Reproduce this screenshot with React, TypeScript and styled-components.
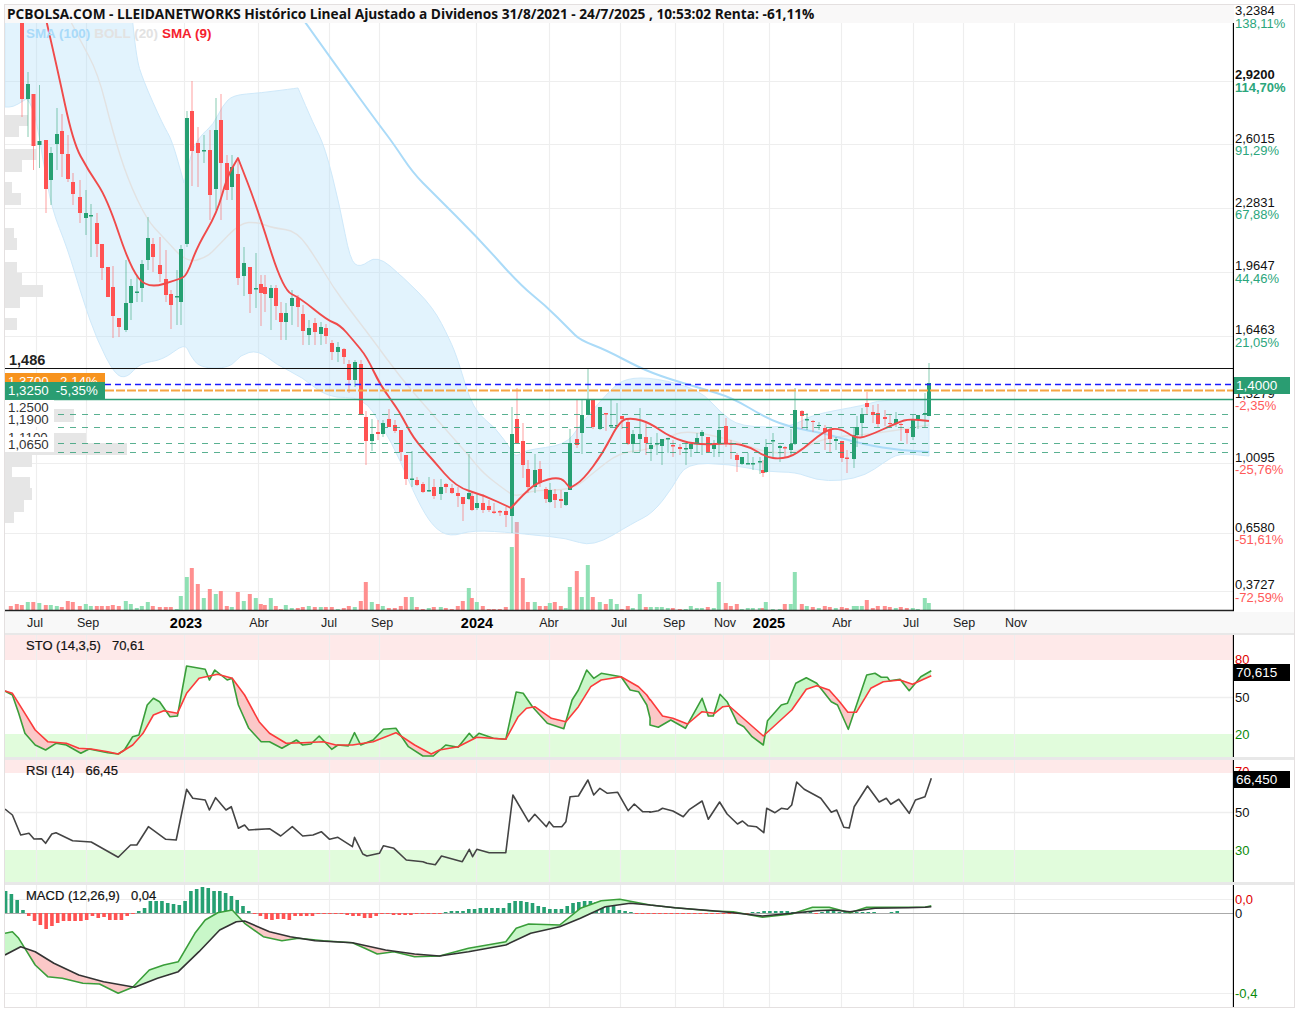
import React from "react";
import styled, { createGlobalStyle } from "styled-components";

type Pt = [number, number];
// x, body top, body bottom, wick top, wick bottom, colour, volume
type Candle = [number, number, number, number, number, "r" | "g", number];

const RED = "#ff5252";
const GREEN = "#26a072";
const VOL_RED = "#ff8f8f";
const VOL_GREEN = "#8fe0b4";
const GRID = "#eeeeee";

const candles: Candle[] = [
  [11, 0, 0, 0, 0, "r", 4], [17, 0, 0, 0, 0, "r", 6],
  [22, 10, 99, 10, 117, "r", 5], [28, 84, 99, 72, 137, "g", 8], [33.5, 94, 146, 94, 170, "r", 8], [39.5, 141, 145, 85, 168, "g", 7],
  [46, 140, 189, 140, 213, "r", 5], [51, 153, 180, 147, 205, "g", 5], [57, 134, 144, 108, 170, "g", 4], [62, 131, 154, 114, 177, "r", 3],
  [68, 154, 179, 135, 182, "r", 9], [73, 182, 194, 173, 205, "r", 8], [80, 197, 213, 180, 223, "r", 4], [86, 213, 218, 190, 235, "g", 6],
  [91, 215, 216.5, 204, 257, "g", 4], [97, 223, 244, 213, 257, "r", 4], [102, 244, 268, 244, 280, "r", 4], [108, 267, 297, 267, 297, "r", 4],
  [113, 287, 316, 266, 338, "r", 5], [119, 318, 327, 318, 337, "r", 4], [126, 303, 330, 260, 332, "g", 9], [131, 286, 303, 279, 320, "g", 6],
  [137, 291.5, 293, 275, 302, "g", 2], [142, 264, 288, 260, 302, "g", 4], [148, 238, 260, 217, 270, "g", 8], [153, 244, 257, 238, 272, "r", 4],
  [160, 265, 274, 237, 282, "r", 3], [166, 279, 295, 250, 302, "r", 3], [171, 294, 305, 290, 329, "r", 3], [177, 296, 297.5, 270, 325, "g", 1],
  [181, 249, 302, 245, 325, "g", 14], [187, 118, 244, 111, 247, "g", 33], [192, 111, 151, 81, 186, "r", 42], [198, 143, 153, 127, 187, "r", 26],
  [204, 150, 151.5, 135, 163, "g", 12], [210, 150, 195, 130, 220, "r", 21], [216, 130, 189, 98, 210, "g", 16], [221, 120, 163, 94, 220, "r", 19],
  [227, 163, 190, 155, 200, "r", 4], [232, 167, 187, 155, 200, "g", 3], [238, 174, 278, 158, 285, "r", 18], [244, 263, 276, 247, 296, "g", 9],
  [250, 267, 294, 267, 313, "r", 16], [256, 288, 289.5, 253, 308, "g", 12], [261, 284, 293, 275, 326, "r", 6], [265, 287, 294, 275, 312, "r", 5],
  [271, 288, 298, 285, 330, "g", 12], [276, 288, 306, 285, 320, "r", 4], [281, 313, 322, 302, 340, "r", 1], [286, 313, 322, 303, 340, "g", 5],
  [292, 298, 306, 290, 325, "g", 2], [298, 298, 307, 295, 327, "r", 2], [303, 314, 331, 305, 345, "r", 3], [309, 328, 335, 320, 345, "g", 4],
  [315, 323, 332, 318, 345, "r", 3], [321, 327, 334, 322, 345, "g", 3], [326, 328, 336, 324, 344, "r", 3], [332, 343, 352, 340, 360, "r", 3],
  [338, 347, 352, 342, 362, "g", 1], [344, 349, 357, 348, 364, "r", 2], [349, 364, 380, 360, 393, "r", 4], [355, 362, 380, 360, 387, "g", 3],
  [361, 364, 415, 360, 415, "r", 9], [366, 417, 441, 411, 465, "r", 28], [372, 434, 441, 419, 451, "g", 8], [378, 432, 434, 420, 440, "r", 6],
  [383, 423, 434, 420, 437, "g", 4], [389, 419, 427, 409, 427, "r", 2], [395, 425, 431, 420, 433, "r", 2], [401, 430, 452, 430, 461, "r", 4],
  [406, 455, 479, 455, 485, "r", 13], [412, 478.5, 480, 451, 487, "g", 13], [417, 480, 485, 477, 486, "r", 3], [423, 484, 492, 482, 493, "r", 1],
  [429, 490, 491.5, 477, 492, "g", 2], [434, 487, 496, 479, 499, "r", 3], [441, 487, 494, 479, 500, "g", 3], [446, 484, 487, 483, 493, "r", 2],
  [452, 488, 493, 484, 494, "r", 1], [458, 493, 496, 487, 507, "r", 4], [463, 497, 504, 497, 521, "r", 9], [469, 493, 499, 454, 500, "g", 22],
  [472, 496, 510, 492, 511, "r", 12], [477, 503, 508, 493, 510, "g", 8], [483, 503, 510, 494, 513, "r", 4], [489, 506, 510, 500, 512, "r", 1],
  [494, 511.5, 513, 503, 514, "r", 1], [500, 511, 512.5, 510, 516, "r", 1], [506, 511, 515, 507, 527, "r", 3], [512, 434, 516, 407, 533, "g", 63],
  [517, 419, 443, 388, 444, "r", 88], [523, 441, 465, 423, 478, "r", 32], [528, 469, 487, 460, 493, "r", 8], [535, 470, 487, 454, 493, "g", 8],
  [540, 469, 483, 461, 487, "r", 4], [546, 489, 499, 487, 503, "r", 4], [550, 490, 502, 483, 503, "g", 7], [555, 494, 500, 489, 508, "r", 8],
  [561, 499, 501, 490, 508, "r", 4], [566, 492, 505, 492, 506, "g", 2], [570, 443, 490, 429, 490, "g", 23], [577, 439, 445, 400, 448, "r", 39],
  [582, 415, 433, 400, 454, "g", 13], [588, 399, 415, 368, 415, "g", 45], [593, 399, 427, 399, 429, "r", 13], [600, 407, 429, 407, 430, "g", 8],
  [606, 413, 414.5, 413, 431, "r", 6], [611, 425, 426.5, 399, 426, "g", 11], [617, 425, 426.5, 403, 427, "g", 6], [622, 416, 419, 416, 429, "r", 1],
  [628, 422, 444, 418, 445, "r", 4], [633, 434, 444, 430, 453, "g", 2], [640, 434, 439, 408, 452, "g", 16], [646, 437, 443, 423, 455, "r", 3],
  [651, 445, 449, 437, 461, "g", 3], [657, 443, 444.5, 433, 455, "g", 3], [662, 439, 446, 439, 465, "g", 3], [668, 438, 439.5, 438, 453, "g", 2],
  [673, 445, 446.5, 440, 457, "r", 2], [680, 447, 449, 444, 455, "r", 1], [686, 448, 449.5, 443, 465, "g", 1], [691, 444, 449, 443, 457, "g", 4],
  [697, 438, 443, 433, 453, "g", 2], [702, 432, 436, 430, 455, "g", 2], [708, 437, 452, 437, 453, "r", 3], [714, 444, 449, 440, 457, "g", 2],
  [719, 430, 444, 415, 457, "g", 28], [726, 426, 444, 418, 447, "r", 7], [731, 443, 444.5, 440, 459, "r", 4], [737, 455, 460, 453, 472, "r", 6],
  [742, 457, 464, 457, 465, "g", 1], [748, 463, 464.5, 453, 464, "g", 2], [753, 463, 464.5, 457, 470, "g", 2], [760, 461, 462.5, 457, 474, "g", 2],
  [763, 470, 473, 460, 477, "r", 2], [766, 447, 472, 439, 473, "g", 8], [773, 440, 441.5, 433, 458, "g", 1], [780, 446, 448, 445, 462, "g", 1],
  [785, 447, 448.5, 446, 457, "r", 6], [791, 444, 450, 429, 455, "g", 6], [795, 410, 444, 388, 445, "g", 38], [802, 411, 416, 410, 429, "r", 6],
  [807, 419, 420.5, 413, 430, "g", 4], [813, 421, 422, 420, 432, "r", 3], [819, 425, 426, 422, 430, "g", 2], [825, 428, 432, 425, 450, "r", 4],
  [830, 430, 439, 428, 452, "r", 3], [836, 439, 441, 437, 450, "g", 2], [842, 441, 458, 441, 462, "r", 3], [847, 457.5, 459, 450, 473, "r", 2],
  [854, 435, 459, 427, 468, "g", 4], [857, 427, 435, 416, 447, "g", 4], [862, 414, 423, 408, 437, "g", 4], [867, 403, 407, 392, 415, "r", 10],
  [873, 412, 415, 405, 423, "r", 2], [878, 413, 424, 404, 427, "r", 4], [885, 417, 419, 410, 426, "r", 4], [890, 423, 424, 414, 426, "r", 3],
  [896, 419, 424, 412, 427, "g", 2], [901, 424, 425, 423, 441, "r", 3], [907, 429, 433, 429, 444, "r", 2], [913, 420, 437, 415, 440, "g", 2],
  [918, 415, 419, 415, 429, "g", 1], [925, 413, 414.5, 393, 427, "g", 12], [929, 383, 416, 363, 416, "g", 7],
];

const z5 = (p: Pt[]): Pt[] => p.map(([x, y]) => [x / 2.412, 630 + y / 3]);
const z6 = (p: Pt[]): Pt[] => p.map(([x, y]) => [650 + x / 2.4, 630 + y / 3]);

const bandUpper: Pt[] = [[132, 15], [136, 57], [143, 80], [163, 125], [172, 140], [184, 183], [184, 183], [193, 147], [203, 133], [213, 125], [223, 105], [233, 95], [260, 93], [298, 88], [298, 88], [313, 123], [325, 147], [340, 207], [350, 260], [360, 268], [377, 255], [403, 277], [433, 307], [450, 340], [458, 360], [473, 410], [496, 428], [511, 450], [516, 457], [525, 450], [566, 445], [580, 425], [610, 390], [626, 378], [656, 378], [700, 390], [720, 412], [740, 427], [793, 427], [810, 415], [866, 405], [880, 400], [929, 400], [929, 400]];
const bandLower: Pt[] = [[929, 456], [929, 456], [899, 453], [883, 463], [866, 475], [841, 481], [816, 480], [796, 472], [766, 472], [730, 464], [686, 463], [673, 487], [653, 513], [633, 523], [593, 547], [566, 538], [533, 535], [516, 533], [473, 530], [450, 537], [433, 527], [417, 500], [400, 460], [383, 427], [363, 397], [328, 398], [302, 377], [277, 365], [258, 350], [240, 355], [230, 368], [200, 368], [190, 355], [185, 343], [163, 360], [140, 363], [127, 378], [115, 375], [97, 340], [83, 300], [67, 247], [52, 210], [43, 160], [36, 118], [28, 98], [23, 101], [13, 107], [5, 107], [5, 107], [5, 15]];
const sma100: Pt[] = [[300, 15], [337, 67], [377, 122], [393, 143], [413, 173], [433, 193], [480, 240], [520, 285], [545, 305], [570, 330], [580, 340], [606, 350], [640, 368], [666, 378], [700, 388], [733, 398], [766, 418], [793, 428], [823, 433], [866, 445], [899, 450], [929, 452]];
const bollMid: Pt[] = [[70, 20], [80, 40], [98, 73], [113, 133], [128, 180], [147, 220], [163, 237], [187, 263], [207, 257], [217, 247], [240, 223], [257, 222], [273, 228], [297, 231], [317, 260], [333, 287], [350, 310], [373, 340], [400, 377], [433, 415], [470, 457], [483, 473], [505, 490], [516, 497], [533, 490], [573, 490], [593, 473], [620, 452], [650, 450], [666, 438], [686, 430], [733, 440], [766, 453], [796, 453], [825, 437], [866, 435], [929, 425]];
const sma9: Pt[] = [[45, 15], [57, 67], [73, 142], [88, 170], [107, 198], [130, 267], [147, 289], [180, 279], [187, 275], [197, 247], [217, 213], [227, 177], [238, 158], [238, 158], [257, 207], [283, 290], [300, 298], [327, 320], [340, 325], [353, 340], [367, 357], [380, 385], [400, 412], [413, 438], [433, 460], [456, 487], [483, 495], [511, 508], [511, 508], [523, 495], [536, 483], [560, 476], [570, 488], [570, 488], [583, 480], [603, 453], [620, 420], [633, 418], [650, 423], [670, 437], [696, 445], [733, 443], [750, 447], [766, 457], [780, 459], [796, 455], [825, 430], [840, 428], [855, 438], [866, 437], [899, 422], [909, 419], [929, 421]];

const stoK: Pt[] = [...z5([[12, 183], [30, 195], [45, 250], [60, 310], [85, 345], [110, 360], [135, 340], [160, 345], [195, 370], [215, 357], [260, 368], [285, 372], [300, 360], [320, 320], [335, 315], [355, 225], [370, 205], [385, 215], [410, 260], [428, 258], [450, 108], [495, 118], [505, 150], [518, 120], [548, 150], [560, 145], [575, 225], [600, 295], [630, 335], [650, 335], [680, 355], [715, 330], [730, 345], [750, 342], [770, 318], [800, 358], [815, 345], [840, 348], [855, 308], [870, 345], [900, 330], [925, 298], [955, 295], [985, 350], [1020, 378], [1045, 378], [1075, 345], [1105, 352], [1132, 310], [1142, 325], [1155, 310], [1190, 325], [1220, 328], [1245, 186], [1262, 190], [1285, 232], [1320, 280], [1360, 296], [1380, 210], [1395, 180], [1415, 120], [1432, 145], [1450, 130], [1498, 140], [1520, 180], [1540, 185], [1560, 225], [1568, 265]]), ...z6([[0, 285], [20, 292], [50, 270], [85, 295], [125, 205], [140, 258], [152, 258], [168, 193], [185, 215], [210, 280], [225, 290], [245, 320], [272, 345], [282, 272], [315, 225], [330, 220], [350, 160], [375, 143], [400, 160], [435, 215], [450, 225], [476, 298], [520, 135], [540, 130], [555, 142], [570, 142], [575, 152], [600, 148], [622, 182], [650, 140], [675, 122]])];
const stoD: Pt[] = [...z5([[12, 183], [30, 190], [60, 250], [85, 300], [115, 335], [160, 340], [190, 355], [220, 357], [260, 365], [285, 372], [320, 345], [345, 310], [370, 255], [395, 242], [428, 250], [450, 190], [480, 145], [525, 133], [560, 145], [590, 195], [625, 275], [650, 310], [690, 340], [730, 338], [780, 335], [810, 345], [850, 345], [900, 335], [955, 308], [1000, 345], [1040, 372], [1060, 360], [1105, 350], [1150, 322], [1220, 328], [1250, 260], [1270, 235], [1290, 230], [1330, 265], [1365, 275], [1395, 230], [1425, 170], [1450, 150], [1498, 140], [1540, 170], [1560, 195], [1568, 210]]), ...z6([[0, 208], [30, 258], [55, 265], [90, 282], [125, 245], [155, 250], [175, 230], [190, 228], [272, 318], [340, 240], [375, 178], [400, 167], [430, 180], [455, 215], [475, 247], [495, 247], [530, 175], [560, 155], [600, 150], [630, 163], [675, 137]])];
const rsi: Pt[] = [...z5([[12, 537], [30, 555], [50, 615], [70, 610], [82, 627], [100, 626], [110, 640], [125, 612], [135, 608], [175, 632], [220, 636], [285, 682], [315, 645], [330, 645], [358, 590], [400, 628], [425, 630], [450, 478], [465, 505], [495, 510], [505, 540], [520, 503], [545, 540], [558, 530], [575, 595], [590, 585], [600, 600], [650, 596], [677, 618], [705, 590], [730, 618], [755, 615], [775, 605], [795, 628], [815, 622], [850, 650], [855, 622], [875, 672], [885, 678], [915, 670], [925, 647], [950, 655], [980, 690], [1020, 695], [1030, 700], [1050, 704], [1065, 678], [1115, 695], [1132, 658], [1140, 680], [1150, 658], [1180, 668], [1220, 668], [1237, 495], [1275, 575], [1290, 553], [1318, 590], [1325, 575], [1335, 590], [1355, 590], [1365, 575], [1375, 500], [1395, 498], [1418, 450], [1432, 495], [1447, 475], [1465, 490], [1490, 487], [1515, 542], [1530, 522], [1550, 545], [1568, 545]]), ...z6([[0, 547], [20, 542], [30, 535], [55, 543], [80, 560], [95, 538], [125, 513], [140, 568], [167, 516], [185, 552], [210, 582], [222, 573], [235, 587], [255, 590], [273, 608], [280, 535], [300, 548], [315, 535], [330, 538], [340, 525], [352, 456], [370, 478], [410, 505], [435, 547], [448, 540], [465, 592], [478, 594], [490, 530], [522, 468], [550, 516], [567, 505], [578, 523], [597, 508], [622, 550], [637, 510], [660, 500], [675, 445]])];
const macd: Pt[] = [...z5([[12, 910], [30, 905], [45, 925], [60, 955], [85, 1005], [115, 1040], [150, 1045], [200, 1060], [240, 1062], [285, 1090], [320, 1072], [360, 1020], [395, 1005], [430, 995], [470, 910], [495, 870], [525, 848], [560, 840], [590, 880], [635, 920], [680, 932], [720, 925], [780, 932], [850, 938], [880, 955], [910, 972], [950, 965], [1000, 980], [1060, 978], [1130, 955], [1220, 935], [1245, 895], [1275, 882], [1350, 885], [1400, 835], [1450, 812], [1495, 808], [1568, 825]]), ...z6([[0, 825], [60, 833], [150, 843], [200, 845], [270, 862], [340, 852], [390, 832], [430, 832], [480, 848], [520, 832], [620, 832], [660, 832], [675, 827]])];
const signal: Pt[] = [...z5([[12, 975], [50, 950], [85, 965], [130, 1000], [190, 1035], [250, 1055], [325, 1072], [380, 1045], [430, 1025], [480, 965], [530, 900], [570, 875], [590, 873], [650, 905], [700, 920], [760, 932], [850, 938], [930, 960], [1000, 972], [1060, 978], [1130, 965], [1220, 945], [1280, 910], [1350, 890], [1400, 865], [1460, 830], [1520, 820], [1568, 825]]), ...z6([[0, 825], [60, 833], [150, 842], [200, 848], [270, 858], [340, 850], [400, 842], [440, 840], [480, 845], [540, 835], [620, 833], [660, 832], [675, 830]])];
const hist: number[] = [22, 19, 13, 3, -3, -8, -12, -16, -13, -10, -8, -8, -8, -8, -7, -3, -5, -4, -7, -7, -7, -3, -1, 2, 5, 12, 12, 12, 10, 9, 8, 12, 22, 24, 26, 25, 22, 22, 20, 17, 13, 7, 2, -1, -3, -6, -7, -6, -6, -7, -3, -3, -3, -3, -1, -1, -1, -1, -1, -2, -3, -3, -5, -5, -3, -1, -1, -2, -2, -2, -2, -1, -1, -1, -1, -1, 1, 2, 2, 2, 4, 4, 5, 5, 5, 5, 5, 10, 12, 12, 11, 10, 7, 6, 4, 4, 4, 7, 10, 11, 12, 12, 11, 10, 7, 7, 3, 2, 1, -1, -1, -1, -1, -1, -1, -1, -1, -1, -1, -1, -1, -1, -1, -1, -1, -1, -1, -1, -1, 1, 1, 2, 2, 2, 2, 2, 1, 1, 1, 1, -1, 1, 2, 2, 1, 1, 1, 1, 1, 1, 1, 0, 0, 1, 2];

const verticals = [36, 86, 184, 258, 329, 379, 476, 549, 620, 675, 723, 769, 841, 913, 963, 1014];
const mainHoriz = [81, 144, 208, 272, 336, 463, 533, 591];
const profile: [number, number, number][] = [[115, 126, 23], [126, 137, 14], [149, 160, 32], [160, 172, 17], [182, 193, 7], [193, 205, 16], [228, 238, 9], [238, 250, 12], [262, 273, 12], [273, 285, 17], [285, 297, 38], [297, 308, 15], [318, 330, 12], [409, 422, 69], [433, 443, 81], [443, 455, 122], [455, 467, 27], [467, 477, 7], [477, 488, 25], [488, 500, 27], [500, 512, 19], [512, 523, 9]];

const pts = (p: Pt[]) => p.map(([x, y]) => `${x.toFixed(1)},${y.toFixed(1)}`).join(" ");
const smooth = (p: Pt[], close = false) => {
  let d = `M${p[0][0]} ${p[0][1]}`;
  for (let i = 1; i < p.length - 1; i++) {
    const mx = (p[i][0] + p[i + 1][0]) / 2;
    const my = (p[i][1] + p[i + 1][1]) / 2;
    d += `Q${p[i][0]} ${p[i][1]} ${mx} ${my}`;
  }
  const last = p[p.length - 1];
  return d + `L${last[0]} ${last[1]}` + (close ? "Z" : "");
};
const at = (p: Pt[], x: number) => {
  for (let i = 1; i < p.length; i++) {
    if (x <= p[i][0]) {
      const [x0, y0] = p[i - 1];
      const [x1, y1] = p[i];
      return y0 + ((y1 - y0) * (x - x0)) / Math.max(x1 - x0, 0.001);
    }
  }
  return p[p.length - 1][1];
};
const ribbons = (a: Pt[], b: Pt[]) => {
  const end = Math.min(a[a.length - 1][0], b[b.length - 1][0]);
  const runs: { up: boolean; points: string }[] = [];
  let start = 5;
  let up = at(a, 5) <= at(b, 5);
  const flush = (stop: number) => {
    const top: Pt[] = [];
    const bottom: Pt[] = [];
    for (let x = start; x <= stop; x += 1) {
      top.push([x, at(a, x)]);
      bottom.unshift([x, at(b, x)]);
    }
    runs.push({ up, points: pts([...top, ...bottom]) });
  };
  for (let x = 5; x <= end; x += 1) {
    const now = at(a, x) <= at(b, x);
    if (now !== up) {
      flush(x);
      start = x;
      up = now;
    }
  }
  flush(end);
  return runs;
};

const GlobalStyle = createGlobalStyle`
  html, body { margin: 0; padding: 0; background: #fff; }
  body { font-family: "Liberation Sans", Arial, sans-serif; }
`;
const Frame = styled.div`
  position: relative;
  width: 1291px;
  margin: 4px 0 0 4px;
  box-sizing: border-box;
  border: 1px solid #e4e0e0;
  display: flex;
  flex-direction: column;
`;
const Pane = styled.section`
  display: flex;
  height: ${(p: { $h: number }) => p.$h}px;
`;
const PlotColumn = styled.div`
  position: relative;
  width: 1229px;
  flex: none;
  display: flex;
  flex-direction: column;
`;
const TitleBar = styled.h1`
  margin: 0;
  height: 18px;
  padding-left: 2px;
  background: #f9f8f8;
  font: 700 13.7px/18px "Open Sans", sans-serif;
  color: #111;
  white-space: nowrap;
`;
const Plot = styled.svg`
  display: block;
  flex: none;
`;
const Legend = styled.div`
  position: absolute;
  left: 21px;
  top: 21px;
  display: flex;
  gap: 4px;
  font: 700 13.4px/16px "Liberation Sans", sans-serif;
`;
const LegendItem = styled.span<{ $c: string }>`
  color: ${(p) => p.$c};
`;
const RefLabel = styled.div`
  position: absolute;
  left: 4px;
  top: 346px;
  font: 700 14.5px/18px "Liberation Sans", sans-serif;
  color: #222;
`;
const LevelTag = styled.div<{ $top: number; $bg: string }>`
  position: absolute;
  left: 0;
  top: ${(p) => p.$top}px;
  width: 100px;
  height: 17px;
  padding-left: 3px;
  box-sizing: border-box;
  background: ${(p) => p.$bg};
  color: #fff;
  font: 13.3px/18px "Liberation Sans", sans-serif;
  display: flex;
  gap: 7px;
  white-space: nowrap;
  overflow: hidden;
`;
const LevelLabel = styled.div<{ $top: number }>`
  position: absolute;
  left: 0;
  top: ${(p) => p.$top}px;
  width: 49px;
  height: 15px;
  padding-left: 3px;
  box-sizing: border-box;
  background: #fff;
  color: #333;
  font: 13.3px/15px "Liberation Sans", sans-serif;
  overflow: hidden;
`;
const Axis = styled.div`
  position: relative;
  flex: 1;
  overflow: hidden;
`;
const AxisText = styled.span<{ $top: number; $c?: string; $bold?: boolean }>`
  position: absolute;
  left: 1px;
  top: ${(p) => p.$top}px;
  transform: translateY(-50%);
  color: ${(p) => p.$c ?? "#111"};
  font: ${(p) => (p.$bold ? 700 : 400)} 13px/14px "Liberation Sans", sans-serif;
  white-space: nowrap;
`;
const ValueTag = styled.span<{ $top: number; $bg: string }>`
  position: absolute;
  left: 0;
  top: ${(p) => p.$top}px;
  width: 56px;
  height: 16.5px;
  padding-left: 2px;
  box-sizing: border-box;
  background: ${(p) => p.$bg};
  color: #fff;
  font: 13.5px/17px "Liberation Sans", sans-serif;
`;
const TimeAxis = styled.div`
  position: relative;
  height: 21px;
  background: #f8f8f8;
`;
const TimeLabel = styled.span<{ $x: number; $bold?: boolean }>`
  position: absolute;
  left: ${(p) => p.$x}px;
  top: 3px;
  transform: translateX(-50%);
  color: ${(p) => (p.$bold ? "#000" : "#222")};
  font: ${(p) => (p.$bold ? "700 14.5px" : "400 12.5px")}/16px "Liberation Sans", sans-serif;
`;
const Separator = styled.div<{ $h: number }>`
  height: ${(p) => p.$h}px;
  background: #e8e8e8;
`;
const PaneTitle = styled.div`
  position: absolute;
  left: 21px;
  top: 3px;
  display: flex;
  gap: 11px;
  color: #111;
  font: 13px/16px "Liberation Sans", sans-serif;
  -webkit-text-stroke: 0.2px #111;
`;

const Verticals = ({ y0, y1 }: { y0: number; y1: number }) => (
  <>
    {verticals.map((x) => (
      <line key={x} x1={x + 0.5} x2={x + 0.5} y1={y0} y2={y1} stroke={GRID} strokeWidth={1.2} />
    ))}
  </>
);
const AxisLine = ({ y0, y1 }: { y0: number; y1: number }) => (
  <line x1={1233.5} x2={1233.5} y1={y0} y2={y1} stroke="#000" strokeWidth={1.3} />
);
const Line = ({ p, c, w = 1.5 }: { p: Pt[]; c: string; w?: number }) => (
  <polyline points={pts(p)} fill="none" stroke={c} strokeWidth={w} strokeLinejoin="round" />
);
const Curve = ({ p, c, w }: { p: Pt[]; c: string; w: number }) => (
  <path d={smooth(p)} fill="none" stroke={c} strokeWidth={w} strokeLinejoin="round" />
);
const Ribbon = ({ a, b }: { a: Pt[]; b: Pt[] }) => (
  <>
    {ribbons(a, b).map((r, i) => (
      <polygon key={i} points={r.points} fill={r.up ? "#c9f7c9" : "#fbc8c8"} />
    ))}
  </>
);

const MainChart = () => (
  <Plot width={1229} height={589} viewBox="5 23 1229 589">
    <Verticals y0={23} y1={610} />
    {mainHoriz.map((y) => (
      <line key={y} x1={5} x2={1233} y1={y + 0.5} y2={y + 0.5} stroke={GRID} strokeWidth={1.2} />
    ))}
    {profile.map(([a, b, w]) => (
      <rect key={a} x={5} y={a} width={w} height={b - a} fill="#e6e6e6" />
    ))}
    {candles.map(([x, , , , , c, v]) => (
      <rect key={x} x={x - 2.2} y={610 - v} width={4} height={v} fill={c === "r" ? VOL_RED : VOL_GREEN} />
    ))}
    <path d={smooth([...bandUpper, ...bandLower], true)} fill="#a9dcf9" fillOpacity={0.34} stroke="#cfe9fa" strokeWidth={1} />
    <Curve p={bollMid} c="#e2e2e2" w={1.4} />
    <Curve p={sma100} c="#abdbf8" w={2} />
    {candles.filter((k) => k[4] > 0).map(([x, t, b, wt, wb, c]) => (
      <g key={x} fill={c === "r" ? RED : GREEN}>
        <rect x={x - 0.5} y={wt} width={1} height={wb - wt} opacity={0.55} />
        <rect x={x - 2} y={t} width={4} height={Math.max(b - t, 1)} />
      </g>
    ))}
    <Curve p={sma9} c="#f04a4a" w={1.9} />
    <line x1={5} x2={1233} y1={368.5} y2={368.5} stroke="#111" strokeWidth={1.2} />
    <line x1={105} x2={1233} y1={384.5} y2={384.5} stroke="#1a1aff" strokeWidth={1.3} strokeDasharray="6 4" />
    <line x1={105} x2={1233} y1={390.5} y2={390.5} stroke="#f6a544" strokeWidth={1.8} strokeDasharray="9 2" />
    <line x1={5} x2={1233} y1={399.5} y2={399.5} stroke="#2f9e75" strokeWidth={1.3} />
    {[414.5, 427.5, 443.5, 452.5].map((y) => (
      <line key={y} x1={58} x2={1233} y1={y} y2={y} stroke="#2f9e75" strokeOpacity={0.8} strokeWidth={1} strokeDasharray="6 6" />
    ))}
    <line x1={5} x2={1234} y1={610.5} y2={610.5} stroke="#222" strokeWidth={1.4} />
    <AxisLine y0={23} y1={611} />
  </Plot>
);

const mainAxis: [string, number, string, number, boolean?][] = [
  ["3,2384", 6, "138,11%", 19],
  ["2,9200", 70, "114,70%", 83, true],
  ["2,6015", 134, "91,29%", 146],
  ["2,2831", 198, "67,88%", 210],
  ["1,9647", 261, "44,46%", 274],
  ["1,6463", 325, "21,05%", 338],
  ["1,3279", 389, "-2,35%", 401],
  ["1,0095", 453, "-25,76%", 465],
  ["0,6580", 523, "-51,61%", 535],
  ["0,3727", 580, "-72,59%", 593],
];
const timeLabels: [string, number, boolean?][] = [
  ["Jul", 30], ["Sep", 83], ["2023", 181, true], ["Abr", 254], ["Jul", 324], ["Sep", 377], ["2024", 472, true], ["Abr", 544], ["Jul", 614], ["Sep", 669], ["Nov", 720], ["2025", 764, true], ["Abr", 837], ["Jul", 906], ["Sep", 959], ["Nov", 1011],
];

export default function App() {
  return (
    <>
      <GlobalStyle />
      <Frame>
        <Pane $h={607}>
          <PlotColumn>
            <TitleBar>PCBOLSA.COM - LLEIDANETWORKS Histórico Lineal Ajustado a Dividenos 31/8/2021 - 24/7/2025 , 10:53:02 Renta: -61,11%</TitleBar>
            <MainChart />
            <Legend>
              <LegendItem $c="#a9daf9">SMA (100)</LegendItem>
              <LegendItem $c="#e2e2e2">BOLL (20)</LegendItem>
              <LegendItem $c="#f5222d">SMA (9)</LegendItem>
            </Legend>
            <RefLabel>1,486</RefLabel>
            <LevelTag $top={368} $bg="#f7931e"><span>1,3700</span><span>-2,14%</span></LevelTag>
            <LevelTag $top={377} $bg="#2a9d72"><span>1,3250</span><span>-5,35%</span></LevelTag>
            <LevelLabel $top={395}>1,2500</LevelLabel>
            <LevelLabel $top={407}>1,1900</LevelLabel>
            <LevelLabel $top={425}>1,1100</LevelLabel>
            <LevelLabel $top={432}>1,0650</LevelLabel>
          </PlotColumn>
          <Axis>
            {mainAxis.map(([price, y1, pct, y2, bold]) => (
              <React.Fragment key={price}>
                <AxisText $top={y1} $bold={bold}>{price}</AxisText>
                <AxisText $top={y2} $bold={bold} $c={pct.startsWith("-") ? "#ff5a5a" : "#2ba67c"}>{pct}</AxisText>
              </React.Fragment>
            ))}
            <ValueTag $top={372} $bg="#2a9d72">1,4000</ValueTag>
          </Axis>
        </Pane>
        <TimeAxis>
          {timeLabels.map(([t, x, b]) => (
            <TimeLabel key={`${t}${x}`} $x={x} $bold={b}>{t}</TimeLabel>
          ))}
        </TimeAxis>
        <Separator $h={2} />
        <Pane $h={122}>
          <PlotColumn>
            <Plot width={1229} height={122} viewBox="5 635 1229 122">
              <rect x={5} y={635} width={1229} height={25} fill="#fee9e9" />
              <rect x={5} y={734} width={1229} height={23} fill="#e1fcdc" />
              <Verticals y0={635} y1={757} />
              <line x1={5} x2={1233} y1={697.5} y2={697.5} stroke={GRID} strokeWidth={1.5} />
              <Ribbon a={stoK} b={stoD} />
              <Line p={stoK} c="#3a9e3a" w={1.6} />
              <Line p={stoD} c="#fb3b3b" w={1.6} />
              <AxisLine y0={635} y1={757} />
            </Plot>
            <PaneTitle><span>STO (14,3,5)</span><span>70,61</span></PaneTitle>
          </PlotColumn>
          <Axis>
            <AxisText $top={25} $c="#e00000">80</AxisText>
            <AxisText $top={63}>50</AxisText>
            <AxisText $top={100} $c="#0a8a0a">20</AxisText>
            <ValueTag $top={29} $bg="#000">70,615</ValueTag>
          </Axis>
        </Pane>
        <Separator $h={3} />
        <Pane $h={122}>
          <PlotColumn>
            <Plot width={1229} height={122} viewBox="5 760 1229 122">
              <rect x={5} y={760} width={1229} height={13} fill="#fee9e9" />
              <rect x={5} y={850} width={1229} height={32} fill="#e1fcdc" />
              <Verticals y0={760} y1={882} />
              <line x1={5} x2={1233} y1={812.5} y2={812.5} stroke={GRID} strokeWidth={1.5} />
              <Line p={rsi} c="#444" w={1.6} />
              <AxisLine y0={760} y1={882} />
            </Plot>
            <PaneTitle><span>RSI (14)</span><span>66,45</span></PaneTitle>
          </PlotColumn>
          <Axis>
            <AxisText $top={12} $c="#e00000">70</AxisText>
            <AxisText $top={53}>50</AxisText>
            <AxisText $top={91} $c="#0a8a0a">30</AxisText>
            <ValueTag $top={11} $bg="#000">66,450</ValueTag>
          </Axis>
        </Pane>
        <Separator $h={3} />
        <Pane $h={122}>
          <PlotColumn>
            <Plot width={1229} height={122} viewBox="5 885 1229 122">
              <Verticals y0={885} y1={1007} />
              <line x1={5} x2={1233} y1={899.5} y2={899.5} stroke={GRID} strokeWidth={1.2} />
              <line x1={5} x2={1233} y1={993.5} y2={993.5} stroke={GRID} strokeWidth={1.2} />
              <line x1={5} x2={1233} y1={913.5} y2={913.5} stroke="#aaa" strokeWidth={1} />
              {hist.map((h, i) => (
                <rect key={i} x={3.8 + i * 5.79} y={h > 0 ? 913 - h : 913} width={3.6} height={Math.abs(h)} fill={h > 0 ? GREEN : RED} />
              ))}
              <Ribbon a={macd} b={signal} />
              <Line p={macd} c="#3a9e3a" w={1.6} />
              <Line p={signal} c="#333" w={1.6} />
              <AxisLine y0={885} y1={1007} />
            </Plot>
            <PaneTitle><span>MACD (12,26,9)</span><span>0,04</span></PaneTitle>
          </PlotColumn>
          <Axis>
            <AxisText $top={15} $c="#e00000">0,0</AxisText>
            <AxisText $top={29}>0</AxisText>
            <AxisText $top={109} $c="#0a8a0a">-0,4</AxisText>
          </Axis>
        </Pane>
      </Frame>
    </>
  );
}
